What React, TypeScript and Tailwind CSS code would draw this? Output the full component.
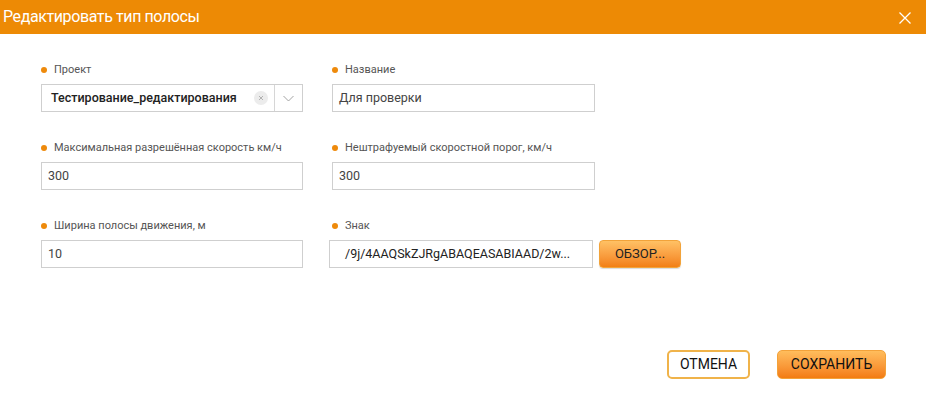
import React from "react";

function Label({ children }: { children: React.ReactNode }) {
  return (
    <div className="flex items-center h-[20px] gap-[7px] pl-[0px]">
      <span className="w-[6px] h-[6px] rounded-full bg-[#ee8a0b]" />
      <span className="text-[11px] text-[#555]">{children}</span>
    </div>
  );
}

function Input({ value }: { value: string }) {
  return (
    <div className="h-[28px] border border-[#cfcfcf] bg-white flex items-center px-[6px] text-[12.5px] text-[#444]">
      {value}
    </div>
  );
}

export default function App() {
  return (
    <div
      className="w-[926px] h-[406px] bg-white flex flex-col"
      style={{ fontFamily: "Roboto, 'Liberation Sans', sans-serif" }}
    >
      <div className="h-[34px] bg-[#ed8a05] flex items-center justify-between pl-[3px] pr-[15px] shrink-0">
        <span className="text-white text-[16px] tracking-[-0.4px]">Редактировать тип полосы</span>
        <svg width="12" height="12" viewBox="0 0 12 12" className="mt-[1px]">
          <path d="M0.5 0.5L11.5 11.5M11.5 0.5L0.5 11.5" stroke="white" strokeWidth="1.3" fill="none" />
        </svg>
      </div>

      <div className="pl-[41px] pt-[26px] grid grid-cols-[262px_263px] gap-x-[29px] gap-y-[26px]">
        <div className="flex flex-col gap-[4px]">
          <Label>Проект</Label>
          <div className="h-[28px] border border-[#cfcfcf] bg-white flex items-center">
            <span className="flex-1 pl-[9px] text-[12.5px] font-medium text-[#222]">
              Тестирование_редактирования
            </span>
            <span className="w-[14px] h-[14px] rounded-full bg-[#ececec] flex items-center justify-center mr-[6px]">
              <svg width="6" height="6" viewBox="0 0 6 6">
                <path d="M1 1L5 5M5 1L1 5" stroke="#aaa" strokeWidth="0.9" />
              </svg>
            </span>
            <span className="w-px h-full bg-[#d6d6d6]" />
            <span className="w-[27px] flex items-center justify-center">
              <svg width="11" height="7" viewBox="0 0 11 7">
                <path d="M0.5 1L5.5 6L10.5 1" stroke="#999" strokeWidth="0.9" fill="none" />
              </svg>
            </span>
          </div>
        </div>
        <div className="flex flex-col gap-[4px]">
          <Label>Название</Label>
          <Input value="Для проверки" />
        </div>

        <div className="flex flex-col gap-[4px]">
          <Label>Максимальная разрешённая скорость км/ч</Label>
          <Input value="300" />
        </div>
        <div className="flex flex-col gap-[4px]">
          <Label>Нештрафуемый скоростной порог, км/ч</Label>
          <Input value="300" />
        </div>

        <div className="flex flex-col gap-[4px]">
          <Label>Ширина полосы движения, м</Label>
          <Input value="10" />
        </div>
        <div className="flex flex-col gap-[4px]">
          <Label>Знак</Label>
          <div className="flex items-center gap-[6px] -ml-[3px]">
            <div className="w-[264px] shrink-0 h-[28px] border border-[#cfcfcf] bg-white flex items-center pl-[15px] text-[12.5px] text-[#222]">
              /9j/4AAQSkZJRgABAQEASABIAAD/2w...
            </div>
            <button className="h-[28px] w-[82px] shrink-0 rounded-[4px] border border-[#f2a33a] bg-gradient-to-b from-[#ffc164] to-[#f27f12] text-[13px] text-[#222] shadow-[0_1px_1px_rgba(0,0,0,0.15)]">
              ОБЗОР...
            </button>
          </div>
        </div>
      </div>

      <div className="flex-1" />
      <div className="flex justify-end gap-[27px] pr-[40px] pb-[27px]">
        <button className="h-[29px] w-[83px] rounded-[5px] border-2 border-[#f0b34a] bg-white text-[14px] text-[#111]">
          ОТМЕНА
        </button>
        <button className="h-[29px] w-[109px] rounded-[5px] border border-[#f3a23a] bg-gradient-to-b from-[#ffbd5c] to-[#f37c10] text-[14px] text-[#111]">
          СОХРАНИТЬ
        </button>
      </div>
    </div>
  );
}
